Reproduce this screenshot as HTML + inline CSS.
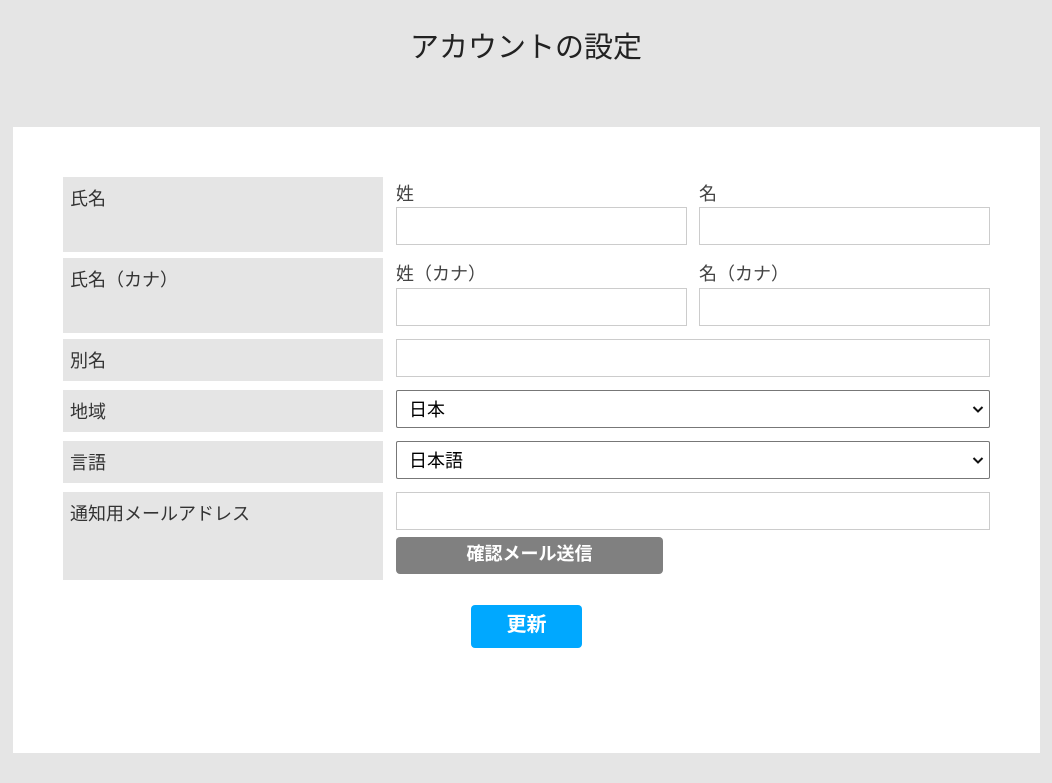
<!DOCTYPE html>
<html><head><meta charset="utf-8"><style>
*{box-sizing:border-box;margin:0;padding:0}
body{width:1052px;height:783px;background:#e5e5e5;position:relative;font-family:"Liberation Sans","Noto Sans CJK JP",sans-serif;overflow:hidden}
.a{position:absolute}
h1{position:absolute;left:0;width:1052px;top:24px;text-align:center;font-weight:normal;font-size:29px;color:#222}
.panel{left:13px;top:127px;width:1027px;height:626px;background:#fff}
.lab{background:#e5e5e5;left:63px;width:320px;color:#333;font-size:18px;padding:8px 7px}
.inp{border:1px solid #ccc;background:#fff;height:38px}
.sub{font-size:18px;color:#444}
.sel{border:1px solid #777;border-radius:2px;height:38px;left:396px;width:594px;font-size:18px;padding:5px 12px;color:#000}
.sel svg{position:absolute;right:5px;top:14px}
.btn{color:#fff;font-weight:bold;text-align:center;border-radius:4px}
</style></head><body>
<h1>アカウントの設定</h1>
<div class="a panel"></div>
<div class="a lab" style="top:177px;height:75px">氏名</div>
<div class="a lab" style="top:258px;height:75px">氏名（カナ）</div>
<div class="a lab" style="top:339px;height:42px">別名</div>
<div class="a lab" style="top:390px;height:42px">地域</div>
<div class="a lab" style="top:441px;height:42px">言語</div>
<div class="a lab" style="top:492px;height:88px">通知用メールアドレス</div>
<div class="a sub" style="left:396px;top:180px">姓</div>
<div class="a sub" style="left:699px;top:180px">名</div>
<div class="a inp" style="left:396px;top:207px;width:291px"></div>
<div class="a inp" style="left:699px;top:207px;width:291px"></div>
<div class="a sub" style="left:396px;top:260px">姓（カナ）</div>
<div class="a sub" style="left:699px;top:260px">名（カナ）</div>
<div class="a inp" style="left:396px;top:288px;width:291px"></div>
<div class="a inp" style="left:699px;top:288px;width:291px"></div>
<div class="a inp" style="left:396px;top:339px;width:594px"></div>
<div class="a sel" style="top:390px">日本<svg width="12" height="9" viewBox="0 0 12 9"><path d="M1.5 2L6 6.5 10.5 2" stroke="#111" stroke-width="2" fill="none"/></svg></div>
<div class="a sel" style="top:441px">日本語<svg width="12" height="9" viewBox="0 0 12 9"><path d="M1.5 2L6 6.5 10.5 2" stroke="#111" stroke-width="2" fill="none"/></svg></div>
<div class="a inp" style="left:396px;top:492px;width:594px"></div>
<div class="a btn" style="left:396px;top:537px;width:267px;height:37px;background:#808080;font-size:18px;line-height:35px">確認メール送信</div>
<div class="a btn" style="left:471px;top:605px;width:111px;height:43px;background:#00a8ff;font-size:20px;line-height:41px">更新</div>
</body></html>
